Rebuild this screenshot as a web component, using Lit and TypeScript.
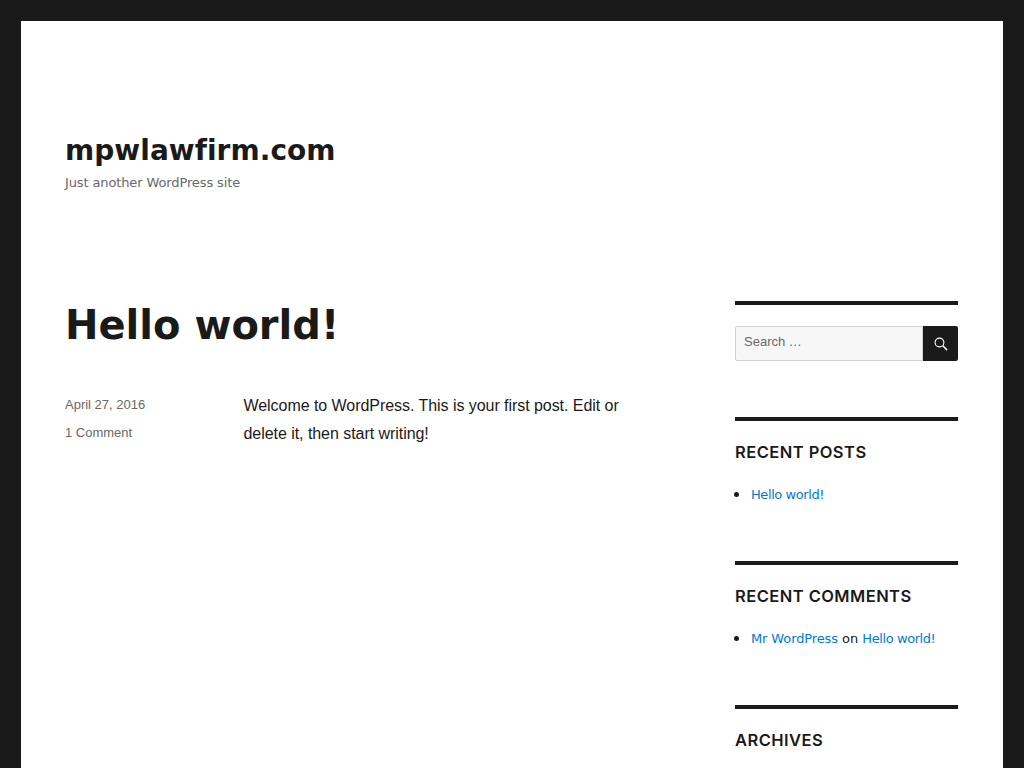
import { LitElement, html, css } from "lit";
import { customElement } from "lit/decorators.js";

@customElement("app-root")
export class AppRoot extends LitElement {
  static styles = css`
    :host { display: block; height: 768px; overflow: hidden; box-sizing: border-box; background: #1a1a1a; padding: 21px 21px 0; color: #1a1a1a; font-family: "DejaVu Sans", sans-serif; }
    .page { background: #fff; height: 747px; overflow: hidden; box-sizing: border-box; padding: 0 45px 0 44px; }
    a { color: #007acc; text-decoration: none; }
    a.name { letter-spacing: -0.12px; }
    a.post-link { letter-spacing: -0.42px; }
    header { padding-top: 112px; height: 280px; box-sizing: border-box; }
    .site-title { font-size: 28px; font-weight: 700; line-height: 35px; height: 35px; letter-spacing: 0.05px; }
    .tagline { font-size: 13px; line-height: 21px; color: #686868; margin-top: 4px; letter-spacing: -0.12px; }
    .columns { display: flex; justify-content: space-between; }
    main { width: 620px; }
    h1 { margin: 0; font-size: 40px; line-height: 48px; font-weight: 700; }
    .post { display: flex; margin-top: 43px; }
    .meta { width: 178px; margin-top: -1px; font: 13px/28px "Liberation Sans", sans-serif; color: #686868; }
    .content { font: 16px/28px "Liberation Sans", sans-serif; width: 390px; letter-spacing: -0.05px; padding-left: 0.5px; }
    aside { width: 223px; }
    .widget { border-top: 4px solid #1a1a1a; padding-top: 21px; height: 144px; box-sizing: border-box; }
    .widget.search { height: 116px; }
    h2 { margin: 0; font-size: 16.5px; line-height: 21px; font-weight: 600; font-family: Inter, sans-serif; letter-spacing: 0.45px; }
    ul { margin: 20px 0 0; padding: 0 0 0 16px; font-size: 13px; line-height: 21px; }
    li::marker { font-size: 17px; }
    form { display: flex; height: 35px; }
    .input { flex: 1; box-sizing: border-box; background: #f7f7f7; border: 1px solid #d1d1d1; border-radius: 2px 0 0 2px; padding-left: 8px; font: 13px/30px "Liberation Sans", sans-serif; color: #686868; }
    .btn { width: 35px; background: #1a1a1a; border-radius: 0 2px 2px 0; display: flex; align-items: center; justify-content: center; }
  `;

  render() {
    return html`
      <div class="page">
        <header>
          <div class="site-title">mpwlawfirm.com</div>
          <div class="tagline">Just another WordPress site</div>
        </header>
        <div class="columns">
          <main>
            <h1>Hello world!</h1>
            <div class="post">
              <div class="meta"><div>April 27, 2016</div><div>1 Comment</div></div>
              <div class="content">Welcome to WordPress. This is your first post. Edit or delete it, then start writing!</div>
            </div>
          </main>
          <aside>
            <section class="widget search">
              <form>
                <div class="input">Search …</div>
                <div class="btn">
                  <svg width="16" height="16" viewBox="0 0 16 16" fill="none" stroke="#fff" stroke-width="1.1"><circle cx="6.5" cy="6.5" r="4.4"/><path d="M9.8 9.8l4.3 4.3" stroke-width="1.5"/></svg>
                </div>
              </form>
            </section>
            <section class="widget">
              <h2>RECENT POSTS</h2>
              <ul><li><a class="post-link" href="#">Hello world!</a></li></ul>
            </section>
            <section class="widget">
              <h2>RECENT COMMENTS</h2>
              <ul><li><a class="name" href="#">Mr WordPress</a> on <a class="post-link" href="#">Hello world!</a></li></ul>
            </section>
            <section class="widget">
              <h2>ARCHIVES</h2>
            </section>
          </aside>
        </div>
      </div>
    `;
  }
}
